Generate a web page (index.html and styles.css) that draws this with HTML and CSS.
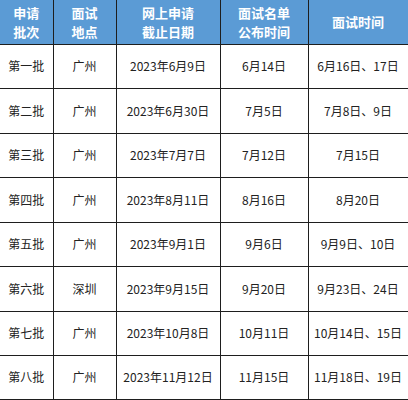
FILE: index.html
```html
<!DOCTYPE html>
<html lang="zh-CN">
<head>
<meta charset="utf-8">
<link rel="stylesheet" href="styles.css">
</head>
<body>
<table class="sched">
  <colgroup>
    <col class="c1"><col class="c2"><col class="c3"><col class="c4"><col class="c5">
  </colgroup>
  <thead>
    <tr class="hd">
      <th>申请<br>批次</th>
      <th>面试<br>地点</th>
      <th>网上申请<br>截止日期</th>
      <th>面试名单<br>公布时间</th>
      <th>面试时间</th>
    </tr>
  </thead>
  <tbody>
    <tr class="ra"><td>第一批</td><td>广州</td><td>2023年6月9日</td><td>6月14日</td><td>6月16日、17日</td></tr>
    <tr class="rb"><td>第二批</td><td>广州</td><td>2023年6月30日</td><td>7月5日</td><td>7月8日、9日</td></tr>
    <tr class="ra"><td>第三批</td><td>广州</td><td>2023年7月7日</td><td>7月12日</td><td>7月15日</td></tr>
    <tr class="rb"><td>第四批</td><td>广州</td><td>2023年8月11日</td><td>8月16日</td><td>8月20日</td></tr>
    <tr class="ra"><td>第五批</td><td>广州</td><td>2023年9月1日</td><td>9月6日</td><td>9月9日、10日</td></tr>
    <tr class="rb"><td>第六批</td><td>深圳</td><td>2023年9月15日</td><td>9月20日</td><td>9月23日、24日</td></tr>
    <tr class="ra"><td>第七批</td><td>广州</td><td>2023年10月8日</td><td>10月11日</td><td>10月14日、15日</td></tr>
    <tr class="ra"><td>第八批</td><td>广州</td><td>2023年11月12日</td><td>11月15日</td><td>11月18日、19日</td></tr>
  </tbody>
</table>
</body>
</html>
```
FILE: styles.css
```css
html, body {
  margin: 0;
  padding: 0;
  background: #ffffff;
}
.sched {
  border-collapse: collapse;
  table-layout: fixed;
  width: 408px;
  font-family: "Noto Sans CJK SC", "Noto Sans", sans-serif;
  color: #222222;
}
.c1 { width: 53px; }
.c2 { width: 63px; }
.c3 { width: 104px; }
.c4 { width: 88px; }
.c5 { width: 100px; }
.sched th, .sched td {
  border: 1px solid #1e1e1e;
  padding: 0;
  text-align: center;
  vertical-align: middle;
}
.sched th {
  background: #5b9bd5;
  color: #ffffff;
  font-weight: bold;
  font-size: 13px;
  line-height: 19px;
  border-top: none;
  border-left: none;
}
.sched td {
  font-size: 12px;
  line-height: 16px;
}
.sched td:first-child { border-left: none; }
.hd { height: 44px; }
.ra { height: 44px; }
.rb { height: 45px; }
```
